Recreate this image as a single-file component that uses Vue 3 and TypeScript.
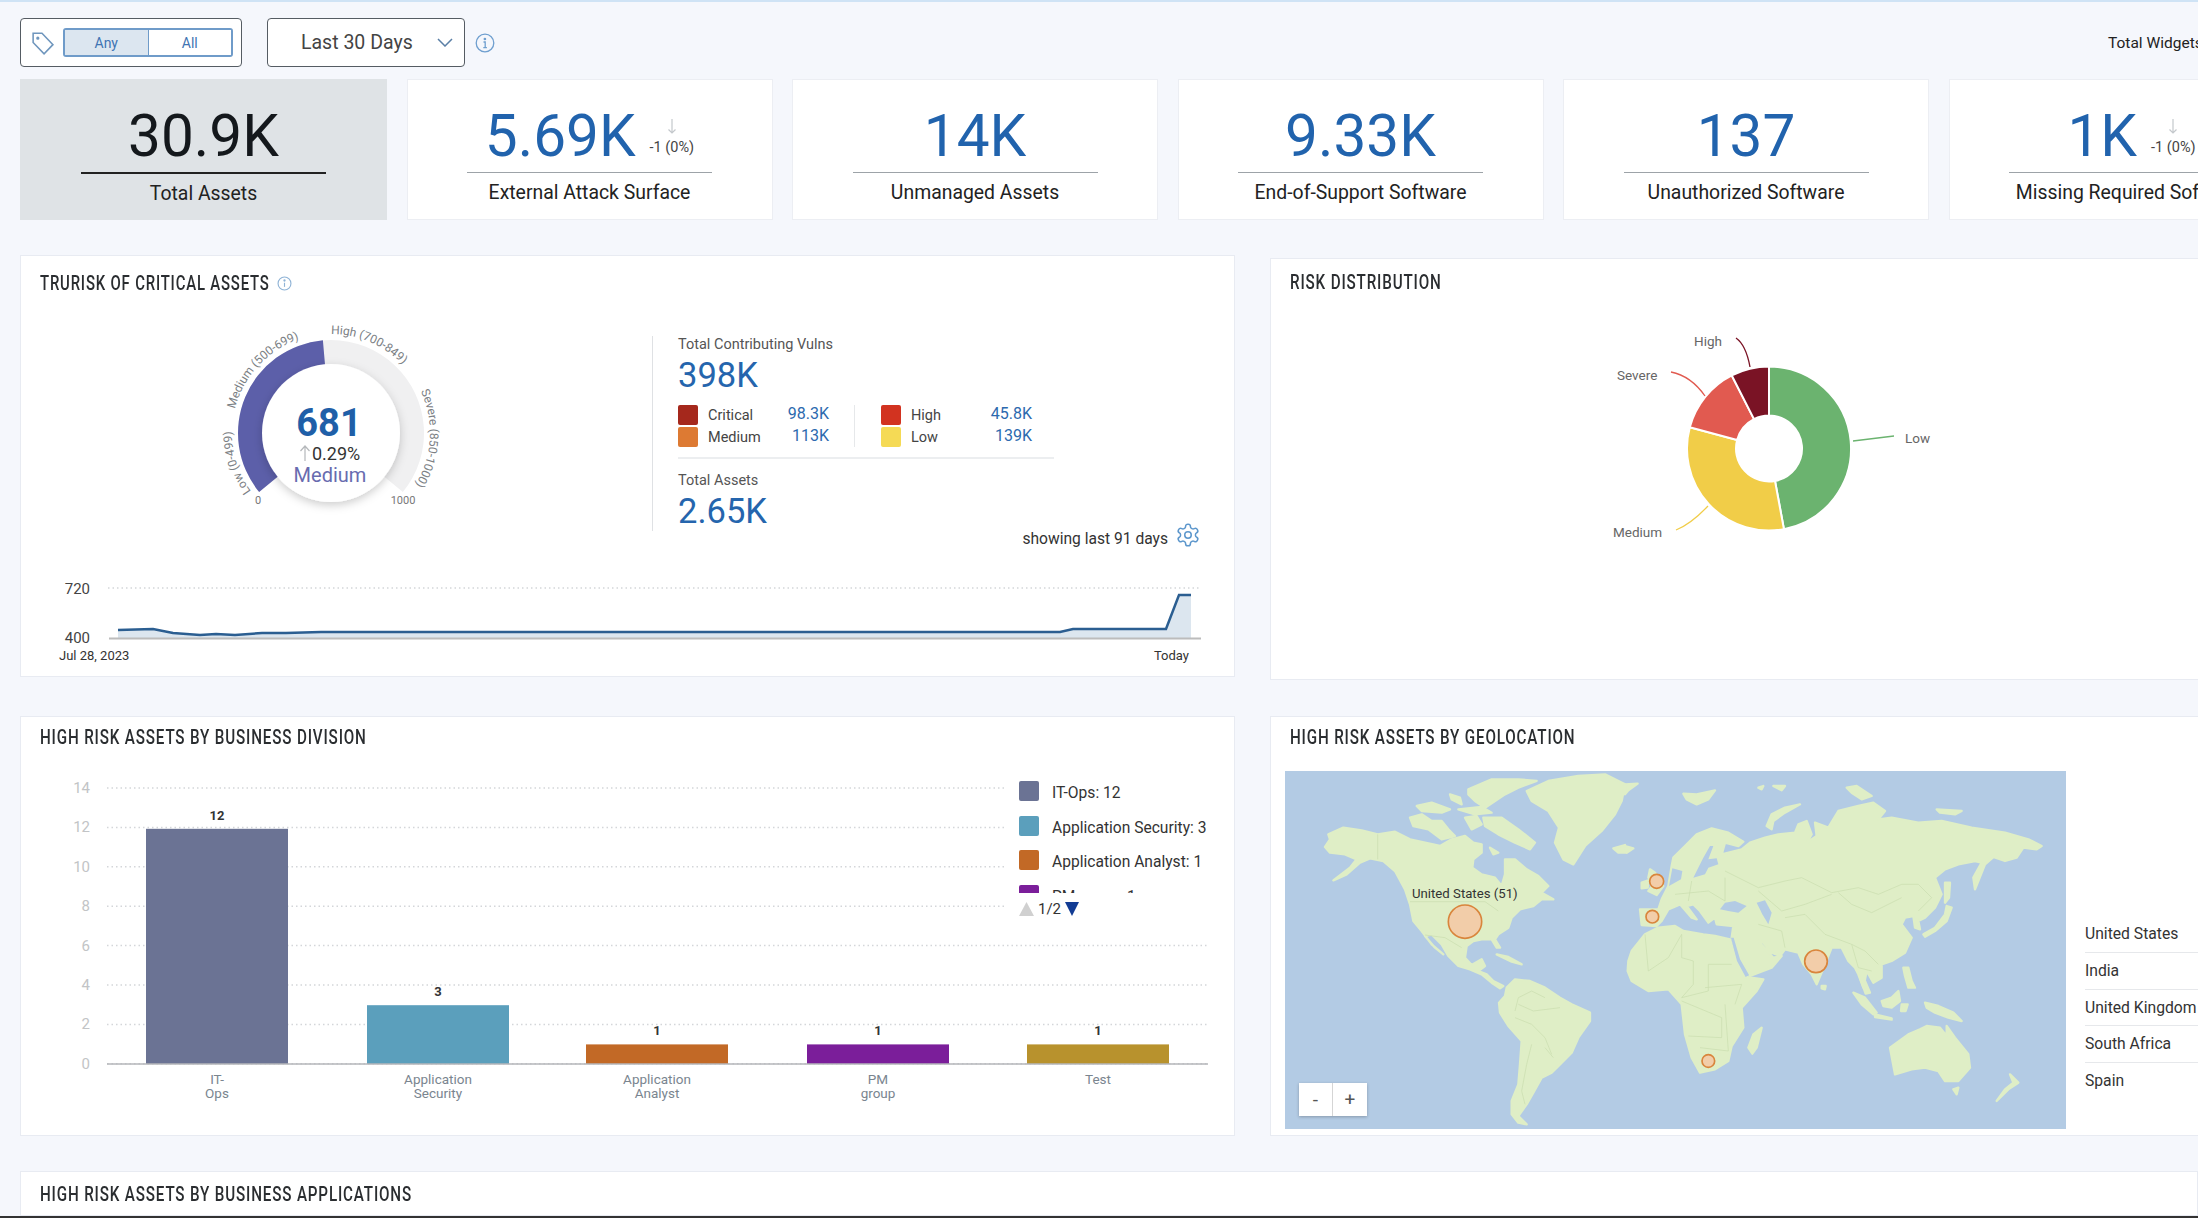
<template>
  <div class="page">
    <div class="toolbar">
      <div class="filter-box">
        <svg class="tag-icon" viewBox="0 0 24 24" fill="none" stroke="#6f96bd" stroke-width="1.5" preserveAspectRatio="none">
          <path d="M3 3h8.500L22 13.500 13.500 22 3 11.500z" />
          <circle cx="7.500" cy="7.500" r="0.8" fill="#6f96bd" />
        </svg>
        <div class="toggle">
          <button class="toggle-btn active">Any</button>
          <button class="toggle-btn">All</button>
        </div>
      </div>
      <div class="date-select">
        <span>Last 30 Days</span>
        <svg width="16" height="9" viewBox="0 0 16 9" fill="none" stroke="#5a7fa6" stroke-width="1.5"><path d="M1 1l7 7 7-7" /></svg>
      </div>
      <svg class="info-icon" width="20" height="20" viewBox="0 0 20 20" fill="none" stroke="#6f9fcf" stroke-width="1.3">
        <circle cx="10" cy="10" r="8.8" />
        <path d="M8.500 9h1.700v5.400M8.300 14.600h3.600" />
        <circle cx="9.900" cy="6" r="0.7" fill="#6f9fcf" />
      </svg>
      <div class="widget-count">Total Widgets: 12</div>
    </div>

    <div class="kpi-row">
      <div v-for="card in kpis" :key="card.label" class="kpi-card" :class="{ selected: card.selected }">
        <div class="kpi-value-row">
          <span class="kpi-value">{{ card.value }}</span>
          <div v-if="card.delta" class="kpi-delta">
            <svg width="10" height="15" viewBox="0 0 10 15" fill="none" stroke="#c4c8cc" stroke-width="1.2"><path d="M5 0v14M1.500 10.500L5 14l3.500-3.500" /></svg>
            <span>{{ card.delta }}</span>
          </div>
        </div>
        <div class="kpi-rule"></div>
        <div class="kpi-label">{{ card.label }}</div>
      </div>
    </div>

    <div class="panel-row first">
      <section class="panel trurisk">
        <header class="panel-head head-trurisk">
          <h3 class="title trurisk-title">TRURISK OF CRITICAL ASSETS</h3>
          <svg width="15" height="15" viewBox="0 0 20 20" fill="none" stroke="#8fb3d6" stroke-width="1.5">
            <circle cx="10" cy="10" r="8.600" />
            <path d="M10 9v5.500" />
            <circle cx="10" cy="6" r="0.8" fill="#8fb3d6" />
          </svg>
        </header>
        <div class="trurisk-body">
          <svg class="gauge" width="320" height="230" viewBox="0 0 320 230">
            <defs>
              <filter id="discShadow" x="-30%" y="-30%" width="160%" height="160%">
                <feDropShadow dx="0" dy="3" stdDeviation="5" flood-color="#000" flood-opacity="0.2" />
              </filter>
              <path v-for="label in gaugeLabels" :id="label.id" :key="label.id" :d="circleArc(151, 132, label.r, label.from, label.to)" />
            </defs>
            <path :d="ringSlice(151, 132, 93, 60, -129.4, 129.4)" fill="#f0f0f1" />
            <path :d="ringSlice(151, 132, 93, 60, -129.4, -5)" fill="#5c5fa9" />
            <circle cx="151" cy="132" r="69" fill="#fff" filter="url(#discShadow)" />
            <text v-for="label in gaugeLabels" :key="label.text" class="gauge-label">
              <textPath :href="'#' + label.id">{{ label.text }}</textPath>
            </text>
            <text x="78" y="203" class="gauge-tick" text-anchor="middle">0</text>
            <text x="223" y="203" class="gauge-tick" text-anchor="middle">1000</text>
            <text x="149" y="135" class="gauge-score" text-anchor="middle">681</text>
            <path d="M125 160v-15M120.500 150l4.500-5 4.500 5" fill="none" stroke="#b5b8bb" stroke-width="1.2" />
            <text x="132" y="159" class="gauge-change">0.29%</text>
            <text x="150" y="181" class="gauge-level" text-anchor="middle">Medium</text>
          </svg>
          <div class="vuln-col">
            <div class="vuln-block">
              <div class="stat-label">Total Contributing Vulns</div>
              <div class="stat-value">398K</div>
              <div class="vuln-groups">
                <div v-for="(group, i) in vulnGroups" :key="i" class="vuln-group">
                  <div v-for="item in group" :key="item.name" class="vuln-item">
                    <i class="swatch" :style="{ background: item.color }"></i>
                    <span class="vuln-name">{{ item.name }}</span>
                    <span class="vuln-count">{{ item.count }}</span>
                  </div>
                </div>
              </div>
              <div class="vuln-rule"></div>
              <div class="stat-label">Total Assets</div>
              <div class="stat-value">2.65K</div>
            </div>
            <div class="showing">
              <span class="showing-text">showing last 91 days</span>
              <svg width="26" height="26" viewBox="0 0 24 24" fill="none" stroke="#5d97cc" stroke-width="1.4" stroke-linejoin="round">
                <path d="M12.220 2h-.44a2 2 0 0 0-2 2v.18a2 2 0 0 1-1 1.730l-.43.25a2 2 0 0 1-2 0l-.15-.08a2 2 0 0 0-2.730.73l-.22.38a2 2 0 0 0 .73 2.730l.15.1a2 2 0 0 1 1 1.720v.51a2 2 0 0 1-1 1.740l-.15.09a2 2 0 0 0-.73 2.730l.22.38a2 2 0 0 0 2.730.73l.15-.08a2 2 0 0 1 2 0l.43.25a2 2 0 0 1 1 1.730V20a2 2 0 0 0 2 2h.44a2 2 0 0 0 2-2v-.18a2 2 0 0 1 1-1.730l.43-.25a2 2 0 0 1 2 0l.15.08a2 2 0 0 0 2.730-.73l.22-.39a2 2 0 0 0-.73-2.730l-.15-.08a2 2 0 0 1-1-1.740v-.5a2 2 0 0 1 1-1.740l.15-.09a2 2 0 0 0 .73-2.730l-.22-.38a2 2 0 0 0-2.730-.73l-.15.08a2 2 0 0 1-2 0l-.43-.25a2 2 0 0 1-1-1.730V4a2 2 0 0 0-2-2z" />
                <circle cx="12" cy="12" r="3" />
              </svg>
            </div>
          </div>
        </div>
        <svg class="spark" width="1215" height="95" viewBox="20 575 1215 95">
          <line x1="107" y1="588" x2="1199" y2="588" class="dotted" />
          <path :d="sparkArea" fill="#dce6ef" />
          <path :d="sparkLine" fill="none" stroke="#2b5e91" stroke-width="2.5" />
          <line x1="108" y1="638.500" x2="1200" y2="638.500" stroke="#bcbcbc" stroke-width="2" />
          <text x="89" y="594" class="spark-y" text-anchor="end">720</text>
          <text x="89" y="643" class="spark-y" text-anchor="end">400</text>
          <text x="58" y="660" class="spark-x">Jul 28, 2023</text>
          <text x="1188" y="660" class="spark-x" text-anchor="end">Today</text>
        </svg>
      </section>

      <section class="panel risk-dist">
        <header class="panel-head head-dist">
          <h3 class="title">RISK DISTRIBUTION</h3>
        </header>
        <svg class="donut" width="400" height="240" viewBox="1580 310 400 240">
          <path v-for="s in donut" :key="s.name" :d="ringSlice(1768, 447.5, 82, 33, s.from, s.to)" :fill="s.color" stroke="#fff" stroke-width="2" />
          <path v-for="s in donut" :key="s.name + 'l'" :d="s.leader" :stroke="s.color" fill="none" stroke-width="1.300" />
          <text v-for="s in donut" :key="s.name + 't'" :x="s.tx" :y="s.ty" class="donut-label">{{ s.name }}</text>
        </svg>
      </section>
    </div>

    <div class="panel-row second">
      <section class="panel">
        <header class="panel-head head-low">
          <h3 class="title">HIGH RISK ASSETS BY BUSINESS DIVISION</h3>
        </header>
        <div class="bar-wrap">
          <svg width="1213" height="360" viewBox="21 761 1213 360">
            <g v-for="t in ticks" :key="t.label">
              <line x1="107" :y1="t.y" x2="1208" :y2="t.y" class="dotted" />
              <text x="90" :y="t.y + 5" class="axis-y" text-anchor="end">{{ t.label }}</text>
            </g>
            <g v-for="b in bars" :key="b.name">
              <rect :x="b.x" :y="1064 - b.value * 19.6" width="142" :height="b.value * 19.6" :fill="b.color" />
              <text :x="b.x + 71" :y="1064 - b.value * 19.6 - 9" class="bar-value" text-anchor="middle">{{ b.value }}</text>
              <text v-for="(line, n) in b.lines" :key="line" :x="b.x + 71" :y="1084 + n * 13.500" class="bar-name" text-anchor="middle">{{ line }}</text>
            </g>
            <line x1="107" y1="1064" x2="1208" y2="1064" stroke="#b4b6ba" stroke-width="1.500" />
          </svg>
          <div class="bar-legend">
            <div class="legend-clip">
              <div v-for="b in bars.slice(0, 4)" :key="b.name" class="legend-item">
                <i class="swatch" :style="{ background: b.color }"></i>
                <span>{{ b.legend }}</span>
              </div>
            </div>
            <div class="pager">
              <svg width="15" height="14" viewBox="0 0 15 14"><path d="M7.500 0L15 14H0z" fill="#d0d0d0" /></svg>
              <span>1/2</span>
              <svg width="14" height="14" viewBox="0 0 14 14"><path d="M0 0h14L7 14z" fill="#123c94" /></svg>
            </div>
          </div>
        </div>
      </section>

      <section class="panel">
        <header class="panel-head head-geo">
          <h3 class="title">HIGH RISK ASSETS BY GEOLOCATION</h3>
        </header>
        <div class="geo-body">
          <div class="map">
            <svg width="781" height="358" viewBox="0 0 2343 1074">
              <rect width="2343" height="1074" fill="#b3cbe4" />
              <g fill="#dfeec6" stroke="#dfeec6" stroke-width="7" stroke-linejoin="round">
                <polygon v-for="(land, i) in westLand" :key="i" :points="land" />
                <g transform="translate(1020 0)">
                  <polygon v-for="(land, i) in eastLand" :key="i" :points="land" />
                </g>
              </g>
              <g transform="translate(1020 0)" fill="#b3cbe4">
                <polygon v-for="(sea, i) in eastSea" :key="i" :points="sea" />
              </g>
              <g fill="none" stroke="#c9dcae" stroke-width="2" stroke-linejoin="round">
                <polyline v-for="(line, i) in westBorders" :key="i" :points="line" />
                <g transform="translate(1020 0)">
                  <polyline v-for="(line, i) in eastBorders" :key="i" :points="line" />
                </g>
              </g>
              <circle v-for="p in pins" :key="p.cx" :cx="p.cx" :cy="p.cy" :r="p.r" fill="#f2cda9" stroke="#d9853c" stroke-width="5" />
            </svg>
            <div class="map-tip">United States (51)</div>
            <div class="zoom-btns">
              <button>-</button>
              <button>+</button>
            </div>
          </div>
          <div class="geo-table">
            <div v-for="c in countries" :key="c" class="geo-row">{{ c }}</div>
          </div>
        </div>
      </section>
    </div>

    <section class="panel last">
      <header class="panel-head head-apps">
        <h3 class="title">HIGH RISK ASSETS BY BUSINESS APPLICATIONS</h3>
      </header>
    </section>
    <div class="bottom-strip"></div>
  </div>
</template>

<script setup lang="ts">
const kpis = [
  { value: '30.9K', label: 'Total Assets', selected: true },
  { value: '5.69K', label: 'External Attack Surface', delta: '-1 (0%)' },
  { value: '14K', label: 'Unmanaged Assets' },
  { value: '9.33K', label: 'End-of-Support Software' },
  { value: '137', label: 'Unauthorized Software' },
  { value: '1K', label: 'Missing Required Software', delta: '-1 (0%)' }
]

const vulnGroups = [
  [
    { name: 'Critical', count: '98.3K', color: '#a5281c' },
    { name: 'Medium', count: '113K', color: '#dd7a33' }
  ],
  [
    { name: 'High', count: '45.8K', color: '#d23320' },
    { name: 'Low', count: '139K', color: '#f5da55' }
  ]
]

const polar = (cx: number, cy: number, r: number, deg: number) => {
  const a = (deg * Math.PI) / 180
  return [cx + r * Math.sin(a), cy - r * Math.cos(a)].map((n) => n.toFixed(2)).join(' ')
}

// clockwise arc, angles from 12 o'clock
const circleArc = (cx: number, cy: number, r: number, from: number, to: number) => {
  const large = to - from > 180 ? 1 : 0
  return `M${polar(cx, cy, r, from)} A${r} ${r} 0 ${large} 1 ${polar(cx, cy, r, to)}`
}

const ringSlice = (cx: number, cy: number, outer: number, inner: number, from: number, to: number) => {
  const large = to - from > 180 ? 1 : 0
  return `M${polar(cx, cy, outer, from)} A${outer} ${outer} 0 ${large} 1 ${polar(cx, cy, outer, to)} L${polar(cx, cy, inner, to)} A${inner} ${inner} 0 ${large} 0 ${polar(cx, cy, inner, from)}Z`
}

const gaugeLabels = [
  { id: 'g-low', text: 'Low (0-499)', r: 99, from: -126, to: -78 },
  { id: 'g-med', text: 'Medium (500-699)', r: 99, from: -76, to: -2 },
  { id: 'g-high', text: 'High (700-849)', r: 99, from: 0, to: 62 },
  { id: 'g-sev', text: 'Severe (850-1000)', r: 99, from: 65, to: 140 }
]

const sparkPoints = [
  [117, 630], [152, 629], [172, 633], [199, 635], [215, 634], [234, 635], [261, 633], [285, 633],
  [320, 632], [1059, 632], [1072, 629], [1165, 629], [1178, 595], [1190, 595]
]
const sparkLine = 'M' + sparkPoints.map((p) => p.join(' ')).join(' L')
const sparkArea = sparkLine + ' L1190 638 L117 638Z'

const donut = [
  { name: 'Low', from: 0, to: 169.5, color: '#6bb36f', leader: 'M1852 440 L1893 435', tx: 1904, ty: 442 },
  { name: 'Medium', from: 169.5, to: 285, color: '#f1cd48', leader: 'M1707 505 Q1690 523 1675 529', tx: 1612, ty: 536 },
  { name: 'Severe', from: 285, to: 333, color: '#e15a50', leader: 'M1704 395 Q1690 375 1670 371', tx: 1616, ty: 379 },
  { name: 'High', from: 333, to: 360, color: '#7a1325', leader: 'M1749 366 Q1745 344 1735 337', tx: 1693, ty: 345 }
]

const ticks = [14, 12, 10, 8, 6, 4, 2, 0].map((n, i) => ({ label: String(n), y: 788 + i * 39.4 }))

const bars = [
  { name: 'IT-Ops', value: 12, x: 146, color: '#6b7394', lines: ['IT-', 'Ops'], legend: 'IT-Ops: 12' },
  { name: 'Application Security', value: 3, x: 367, color: '#5b9fbc', lines: ['Application', 'Security'], legend: 'Application Security: 3' },
  { name: 'Application Analyst', value: 1, x: 586, color: '#c26926', lines: ['Application', 'Analyst'], legend: 'Application Analyst: 1' },
  { name: 'PM group', value: 1, x: 807, color: '#7b1e9a', lines: ['PM', 'group'], legend: 'PM group: 1' },
  { name: 'Test', value: 1, x: 1027, color: '#b8922d', lines: ['Test'], legend: 'Test: 1' }
]

const countries = ['United States', 'India', 'United Kingdom', 'South Africa', 'Spain']

// map is hand traced at 3x, the east half sits in a group moved right by 1020
const westLand = [
  '120,228 135,205 130,190 175,170 230,178 278,190 330,182 375,205 420,215 465,225 500,205 540,195 565,215 590,220 590,245 565,265 562,290 590,310 630,320 650,345 660,310 660,265 690,265 725,295 760,315 790,345 770,365 805,385 770,385 745,405 705,415 680,440 670,470 640,490 630,505 645,530 635,530 620,505 590,505 565,510 545,525 540,560 560,582 590,565 600,585 580,600 605,610 625,630 655,645 645,652 620,635 590,610 555,595 520,585 490,555 470,520 440,490 420,495 450,530 475,550 440,520 410,480 385,450 375,400 360,355 330,300 295,270 255,262 225,275 185,310 145,328 195,290 215,265 180,250 135,245',
  '595,140 650,140 700,175 750,215 735,235 690,215 640,190 600,165',
  '375,140 410,130 440,150 470,150 490,175 510,195 470,205 430,175 385,165',
  '395,105 440,95 495,115 470,125 410,120',
  '495,70 525,80 530,100 500,85',
  '550,55 620,25 700,25 755,30 700,50 660,70 600,110 570,90 550,70',
  '540,140 575,135 590,160 560,175',
  '520,115 590,108 620,125 570,130',
  '615,230 640,245 625,250',
  '725,60 790,30 880,15 960,10 1020,40 1010,90 990,130 950,180 900,225 865,280 835,265 810,215 822,170 790,120 740,90',
  '985,232 1020,222 1020,245 1000,245',
  '635,550 670,558 710,580 680,572',
  '665,650 690,625 735,630 780,650 825,680 860,700 915,725 915,750 880,800 860,845 825,880 800,905 770,920 745,965 725,1000 700,1035 725,1060 700,1055 680,1030 680,990 700,940 705,880 710,810 670,765 645,725 642,695 660,675'
]

const eastLand = [
  '0,225 25,232 5,245',
  '0,40 38,38 10,58 0,70',
  '175,68 215,70 270,58 250,85 215,100 185,85',
  '400,50 415,45 410,55',
  '445,45 480,45 470,58',
  '425,165 440,130 480,110 525,100 480,125 445,150 440,175',
  '665,50 695,45 740,75 710,85 680,65',
  '935,115 1010,120 990,130 945,125',
  '75,295 90,305 115,345 95,372 70,360 85,340 70,320',
  '50,335 70,328 68,350 50,352',
  '45,415 100,415 110,385 130,345 140,285 145,260 180,225 215,190 260,172 310,185 355,212 340,225 300,215 290,250 350,235 375,215 420,200 460,190 510,185 520,160 545,150 560,190 545,215 575,195 570,155 610,170 640,120 700,105 745,95 780,120 760,145 800,140 880,155 950,150 1040,170 1140,185 1210,205 1250,225 1235,235 1195,230 1175,260 1140,270 1105,258 1080,280 1050,355 1045,320 1070,275 1050,270 1000,280 960,295 930,320 950,370 930,410 900,440 880,450 885,475 870,470 865,435 840,440 830,460 860,500 840,545 800,570 770,580 770,620 745,635 725,600 715,650 700,610 690,590 670,570 650,530 620,530 600,580 575,640 560,610 535,580 520,545 480,535 465,555 440,545 415,515 400,510 445,560 470,555 440,590 375,615 355,580 330,530 320,500 325,465 275,460 270,440 250,455 225,420 205,400 185,405 215,445 200,440 165,400 130,415 110,450 95,465 50,462',
  '10,570 20,540 60,490 100,470 150,465 175,480 235,490 270,495 315,505 335,570 362,618 415,625 395,660 350,710 355,770 320,825 310,870 270,895 225,905 200,860 180,790 170,700 130,655 70,660 20,630 8,600',
  '370,830 385,790 410,770 395,830 382,848',
  '590,645 602,645 600,655 590,652',
  '895,490 930,470 960,430 965,405 980,410 965,450 930,480 900,497',
  '960,335 975,335 972,380 960,395',
  '835,590 850,590 860,630 870,650 850,650 840,615',
  '685,665 720,680 755,725 745,730 710,700',
  '750,730 800,742 800,746 750,738',
  '770,690 800,680 820,660 825,690 800,710 775,705',
  '830,700 848,700 842,720 828,720',
  '900,695 940,705 985,725 1010,750 970,740 930,725 905,710',
  '705,620 718,625 735,665 722,668',
  '795,830 850,790 885,775 905,765 945,770 965,795 965,765 990,800 1030,850 1035,890 1000,930 960,930 940,900 900,890 860,895 810,910',
  '985,955 1000,950 995,970',
  '1155,910 1180,935 1150,955 1115,990 1140,955 1165,935'
]

const eastSea = [
  '132,345 142,292 172,300 168,325',
  '205,320 215,300 235,260 255,225 265,225 250,265 275,262 280,280 250,290 240,310',
  '285,415 300,395 330,390 365,405 340,425 310,420',
  '395,395 420,388 440,425 430,460 412,430',
  '318,500 326,500 345,565 372,612 362,618 336,570'
]

const westBorders = [
  '278,190 278,265',
  '375,392 600,392 640,420',
  '420,492 480,500 530,530',
  '690,720 700,680 740,660 780,680',
  '690,740 740,760 780,800 800,850',
  '700,700 745,720 825,710',
  '740,820 725,880 710,960 720,1000',
  '780,830 805,860'
]

const eastBorders = [
  '300,300 400,350 480,330 530,320 620,365 700,350 760,370 830,340 880,340 920,380 880,420',
  '640,365 680,400 740,425 830,380',
  '480,440 540,430 600,490 680,520 720,540 760,580',
  '400,360 470,420 540,400 620,370',
  '400,460 470,480 480,530',
  '200,330 190,390',
  '150,370 250,360 300,390 300,320',
  '60,490 70,600 130,560 170,490 170,560 205,570 205,640 170,680 250,660 250,580 320,580',
  '240,650 350,640 330,700',
  '170,690 290,740 290,800 190,795',
  '225,830 310,840 300,700',
  '680,520 700,590 740,600'
]

const pins = [
  { cx: 540, cy: 452, r: 50 },
  { cx: 1115, cy: 331, r: 21 },
  { cx: 1102, cy: 437, r: 19 },
  { cx: 1593, cy: 571, r: 34 },
  { cx: 1270, cy: 870, r: 19 }
]
</script>

<style scoped>
.page {
  width: 2198px;
  height: 1218px;
  box-sizing: border-box;
  border-top: 2px solid #cfe3f5;
  background: #f5f7fc;
  overflow: hidden;
  display: flex;
  flex-direction: column;
  font-family: Roboto, "Liberation Sans", sans-serif;
  color: #222;
}

.toolbar {
  display: flex;
  align-items: center;
  height: 49px;
  margin: 16px 0 12px;
  padding-left: 20px;
  flex-shrink: 0;
}

.filter-box {
  display: flex;
  align-items: center;
  width: 222px;
  height: 49px;
  box-sizing: border-box;
  padding-left: 9px;
  background: #fff;
  border: 1px solid #555c63;
  border-radius: 4px;
}

.tag-icon {
  width: 25px;
  height: 26px;
  margin-right: 8px;
}

.toggle {
  display: flex;
  width: 170px;
  height: 29px;
  box-sizing: border-box;
  border: 2px solid #6f9bc9;
  border-radius: 3px;
}

.toggle-btn {
  flex: 1;
  padding: 0;
  border: none;
  background: #fff;
  color: #3f74b3;
  font: 14px Roboto, sans-serif;
}

.toggle-btn.active {
  background: #dce6f0;
  border-right: 1px solid #6f9bc9;
}

.date-select {
  display: flex;
  align-items: center;
  justify-content: space-between;
  width: 198px;
  height: 49px;
  box-sizing: border-box;
  margin-left: 25px;
  padding: 0 11px 0 33px;
  background: #fff;
  border: 1px solid #555c63;
  border-radius: 4px;
  font-size: 19.500px;
  color: #444;
}

.info-icon {
  margin-left: 10px;
}

.widget-count {
  flex: 0 0 90px;
  min-width: 0;
  margin-left: auto;
  font-size: 15.500px;
  white-space: nowrap;
}

.kpi-row {
  display: flex;
  gap: 19.500px;
  height: 141px;
  margin-bottom: 35px;
  padding-left: 20px;
  flex-shrink: 0;
}

.kpi-card {
  flex: 0 0 366px;
  box-sizing: border-box;
  padding-top: 25px;
  display: flex;
  flex-direction: column;
  align-items: center;
  background: #fff;
  border: 1px solid #eceef3;
}

.kpi-card.selected {
  flex-basis: 367px;
  background: #dfe3e6;
  border-color: #dfe3e6;
}

.kpi-value-row {
  display: flex;
  align-items: center;
  gap: 14px;
  height: 62px;
}

.kpi-value {
  font-size: 58.500px;
  line-height: 62px;
  color: #2163ad;
}

.selected .kpi-value {
  color: #14181c;
}

.kpi-delta {
  display: flex;
  flex-direction: column;
  align-items: center;
  gap: 5px;
  padding-top: 2px;
  font-size: 14.500px;
  color: #444;
}

.kpi-rule {
  width: 245px;
  height: 1px;
  margin-top: 5px;
  background: #9da3a8;
}

.selected .kpi-rule {
  height: 2px;
  background: #222;
}

.kpi-label {
  margin-top: 8px;
  font-size: 19.400px;
  line-height: 24px;
  color: #222;
  white-space: nowrap;
}

.panel-row {
  display: grid;
  grid-template-columns: 1215px 960px;
  gap: 35px;
  padding-left: 20px;
  flex-shrink: 0;
}

.panel-row.first {
  height: 425px;
  margin-bottom: 36px;
}

.panel-row.second {
  height: 420px;
  margin-bottom: 35px;
}

.panel {
  background: #fff;
  border: 1px solid #e8ebf2;
  box-sizing: border-box;
}

.panel-head {
  display: flex;
  align-items: center;
  gap: 8px;
  padding-left: 19px;
  height: 20px;
}

.head-trurisk {
  padding-top: 17px;
  padding-bottom: 8px;
}

.head-dist {
  padding-top: 13px;
  padding-bottom: 13px;
}

.head-low {
  padding-top: 10px;
  padding-bottom: 14px;
}

.head-geo {
  padding-top: 10px;
  padding-bottom: 24px;
}

.head-apps {
  padding-top: 12px;
}

.title {
  margin: 0;
  font-size: 20px;
  line-height: 20px;
  font-weight: 500;
  letter-spacing: 1.100px;
  color: #2a2d30;
  white-space: nowrap;
  transform: scaleX(0.76);
  transform-origin: left center;
}

.trurisk-title {
  width: 229px;
  transform: scaleX(0.745);
}

.trurisk {
  height: 422px;
}

.trurisk-body {
  display: flex;
  height: 274px;
}

.gauge {
  flex-shrink: 0;
  margin-left: 159px;
}

.gauge-label {
  font-size: 12px;
  fill: #7b8084;
}

.gauge-tick {
  font-size: 11px;
  fill: #777;
}

.gauge-score {
  font-size: 38px;
  font-weight: 700;
  fill: #1f5fa8;
}

.gauge-change {
  font-size: 18px;
  fill: #333;
}

.gauge-level {
  font-size: 20px;
  fill: #686baf;
}

.vuln-col {
  width: 549px;
  margin-left: 152px;
  padding-top: 35px;
}

.vuln-block {
  height: 195px;
  box-sizing: border-box;
  padding-left: 25px;
  border-left: 1px solid #dfe1e4;
}

.stat-label {
  font-size: 14.500px;
  line-height: 18px;
  color: #555;
}

.stat-value {
  font-size: 34.500px;
  line-height: 40px;
  margin-top: 1px;
  color: #2565ad;
}

.vuln-groups {
  display: flex;
  margin-top: 10px;
}

.vuln-group {
  width: 151px;
  display: flex;
  flex-direction: column;
  gap: 2px;
}

.vuln-group + .vuln-group {
  margin-left: 25px;
  padding-left: 26px;
  border-left: 1px solid #e6e8ea;
}

.vuln-item {
  display: flex;
  align-items: center;
  height: 20px;
  font-size: 14.500px;
  color: #444;
}

.swatch {
  display: block;
  width: 20px;
  height: 20px;
  flex-shrink: 0;
  border-radius: 2px;
}

.vuln-name {
  margin-left: 10px;
}

.vuln-count {
  margin-left: auto;
  font-size: 16px;
  color: #2c69ae;
  margin-top: -3px;
}

.vuln-rule {
  width: 376px;
  height: 2px;
  margin: 10px 0 13px;
  background: #eceef0;
}

.showing {
  display: flex;
  align-items: center;
  justify-content: flex-end;
  gap: 7px;
  margin-top: -9px;
  font-size: 15.600px;
  color: #333;
}

.showing-text {
  padding-top: 7px;
}

.spark {
  display: block;
}

.dotted {
  stroke: #d4d6d9;
  stroke-width: 1.500;
  stroke-dasharray: 1.500 3;
}

.spark-y {
  font-size: 15px;
  fill: #444;
}

.spark-x {
  font-size: 13px;
  fill: #333;
}

.risk-dist {
  margin-top: 3px;
}

.donut {
  display: block;
  margin: 6px 0 0 310px;
}

.donut-label {
  font-size: 13.500px;
  fill: #666;
}

.bar-wrap {
  position: relative;
}

.bar-wrap svg {
  display: block;
}

.axis-y {
  font-size: 15px;
  fill: #c2c4c6;
}

.bar-value {
  font-size: 13px;
  font-weight: 700;
  fill: #333;
}

.bar-name {
  font-size: 13.500px;
  fill: #7a858f;
}

.bar-legend {
  position: absolute;
  left: 984px;
  top: 14px;
  width: 204px;
  height: 145px;
  box-sizing: border-box;
  padding-left: 14px;
  background: #fff;
}

.legend-clip {
  height: 118px;
  overflow: hidden;
  padding-top: 6px;
  box-sizing: border-box;
}

.legend-item {
  display: flex;
  align-items: flex-start;
  gap: 13px;
  height: 20px;
  margin-bottom: 14.500px;
  font-size: 15.600px;
  line-height: 20px;
  color: #333;
  white-space: nowrap;
}

.legend-item span {
  margin-top: 2px;
}

.pager {
  display: flex;
  align-items: center;
  gap: 4px;
  margin-top: 7px;
  font-size: 15px;
  color: #333;
}

.geo-body {
  display: flex;
  margin-left: 14px;
}

.map {
  position: relative;
  width: 781px;
  height: 358px;
  flex-shrink: 0;
}

.map svg {
  display: block;
}

.map-tip {
  position: absolute;
  left: 127px;
  top: 114px;
  font-size: 13.200px;
  line-height: 18px;
  color: #333;
  white-space: nowrap;
}

.zoom-btns {
  position: absolute;
  left: 14px;
  top: 312px;
  display: flex;
  box-shadow: 0 1px 3px rgba(0, 0, 0, 0.25);
}

.zoom-btns button {
  width: 34px;
  height: 33px;
  padding: 0;
  background: #fff;
  border: none;
  border-right: 1px solid #d5d5d5;
  font: 19px Roboto, sans-serif;
  color: #555;
}

.zoom-btns button:last-child {
  border-right: none;
}

.geo-table {
  flex: 1;
  padding: 145px 0 0 19px;
  background: #fff;
}

.geo-row {
  height: 36.800px;
  line-height: 36px;
  box-sizing: border-box;
  border-bottom: 1px solid #e6e8eb;
  font-size: 15.700px;
  color: #333;
  white-space: nowrap;
}

.geo-row:last-child {
  border-bottom: none;
}

.panel.last {
  flex: 1;
  margin-left: 20px;
  min-height: 0;
}

.bottom-strip {
  height: 2px;
  background: #333;
  flex-shrink: 0;
}
</style>
